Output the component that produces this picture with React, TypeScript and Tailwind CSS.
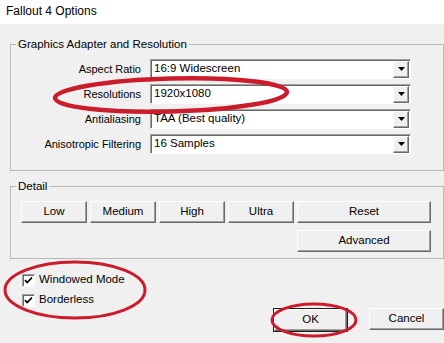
import React from "react";

const font = { fontFamily: '"Liberation Sans", Arial, sans-serif' };

const rows = [
  { label: "Aspect Ratio", value: "16:9 Widescreen" },
  { label: "Resolutions", value: "1920x1080" },
  { label: "Antialiasing", value: "TAA (Best quality)" },
  { label: "Anisotropic Filtering", value: "16 Samples" },
];

function Arrow() {
  return (
    <div className="flex h-[17px] w-[16px] items-center justify-center border border-t-white border-l-white border-b-[#696969] border-r-[#696969] bg-[#f0f0f0] shadow-[inset_-1px_-1px_0_0_#a0a0a0]">
      <svg width="7" height="4" viewBox="0 0 7 4">
        <path d="M0 0H7L3.5 4Z" fill="#000" />
      </svg>
    </div>
  );
}

function Combo({ value }: { value: string }) {
  return (
    <div className="flex h-[20px] w-[261px] items-center justify-between border border-t-[#a0a0a0] border-l-[#a0a0a0] border-b-white border-r-white bg-white pl-[3px] pr-[1px] shadow-[inset_1px_1px_0_0_#696969]">
      <span className="text-[11.5px] leading-none text-black">{value}</span>
      <Arrow />
    </div>
  );
}

function Btn({ children, className = "" }: { children: React.ReactNode; className?: string }) {
  return (
    <button
      className={
        "flex h-[22px] items-center justify-center border border-t-white border-l-white border-b-[#696969] border-r-[#696969] bg-[#f0f0f0] text-[11.5px] leading-none text-black shadow-[inset_-1px_-1px_0_0_#a0a0a0] " +
        className
      }
    >
      {children}
    </button>
  );
}

function Check({ label }: { label: string }) {
  return (
    <div className="flex h-[20px] items-center gap-[4px]">
      <div className="flex h-[13px] w-[13px] items-center justify-center border border-t-[#a0a0a0] border-l-[#a0a0a0] border-b-white border-r-white bg-white shadow-[inset_1px_1px_0_0_#696969]">
        <svg width="9" height="9" viewBox="0 0 9 9">
          <path d="M1 4.2L3.2 6.5L8 1.5" stroke="#000" strokeWidth="1.8" fill="none" />
        </svg>
      </div>
      <span className="text-[11.5px] leading-none text-black">{label}</span>
    </div>
  );
}

export default function App() {
  return (
    <div className="relative h-[343px] w-[444px] overflow-hidden bg-[#f0f0f0]" style={font}>
      <div className="flex h-[24px] items-center bg-white pb-[3px] pl-[6px] text-[12px] text-black">
        Fallout 4 Options
      </div>

      <div className="pl-[10px]">
        <fieldset className="mt-[12px] w-[434px] border border-[#b9b9b9] pb-[16px] pl-0">
          <legend className="ml-[5px] px-[2px] text-[11.5px] leading-[16px] text-black">
            Graphics Adapter and Resolution
          </legend>
          <div className="grid grid-cols-[130px_261px] gap-x-[9px] gap-y-[5px] pt-[7px]">
            {rows.map((r) => (
              <React.Fragment key={r.label}>
                <div className="flex h-[20px] items-center justify-end text-[11px] leading-none text-black">
                  {r.label}
                </div>
                <Combo value={r.value} />
              </React.Fragment>
            ))}
          </div>
        </fieldset>

        <fieldset className="mt-[7px] w-[434px] border border-[#b9b9b9] pb-[6px] pl-[10px]">
          <legend className="-ml-[5px] px-[2px] text-[11.5px] leading-[16px] text-black">Detail</legend>
          <div className="flex gap-[3px] pt-[7px]">
            <Btn className="w-[66px]">Low</Btn>
            <Btn className="w-[66px]">Medium</Btn>
            <Btn className="w-[66px]">High</Btn>
            <Btn className="w-[66px]">Ultra</Btn>
            <Btn className="w-[134px]">Reset</Btn>
          </div>
          <div className="mt-[7px] pl-[276px]">
            <Btn className="w-[134px]">Advanced</Btn>
          </div>
        </fieldset>

        <div className="flex">
          <div className="ml-[12px] mt-[11px] flex flex-col">
            <Check label="Windowed Mode" />
            <Check label="Borderless" />
          </div>
          <div className="ml-auto mt-[49px] flex gap-[21px]">
            <div className="border border-[#1f1f1f]">
              <Btn className="h-[20px] w-[73px]">OK</Btn>
            </div>
            <Btn className="w-[75px]">Cancel</Btn>
          </div>
        </div>
      </div>

      <svg className="pointer-events-none absolute left-0 top-0" width="444" height="343" viewBox="0 0 444 343">
        <ellipse cx="171" cy="95" rx="116" ry="16.5" fill="none" stroke="#cc1c2c" strokeWidth="4.5" transform="rotate(-1.5 171 95)" />
        <ellipse cx="75" cy="290" rx="70" ry="28" fill="none" stroke="#cc1c2c" strokeWidth="3" />
        <ellipse cx="314" cy="320" rx="42" ry="16" fill="none" stroke="#cc1c2c" strokeWidth="3" />
      </svg>
    </div>
  );
}
